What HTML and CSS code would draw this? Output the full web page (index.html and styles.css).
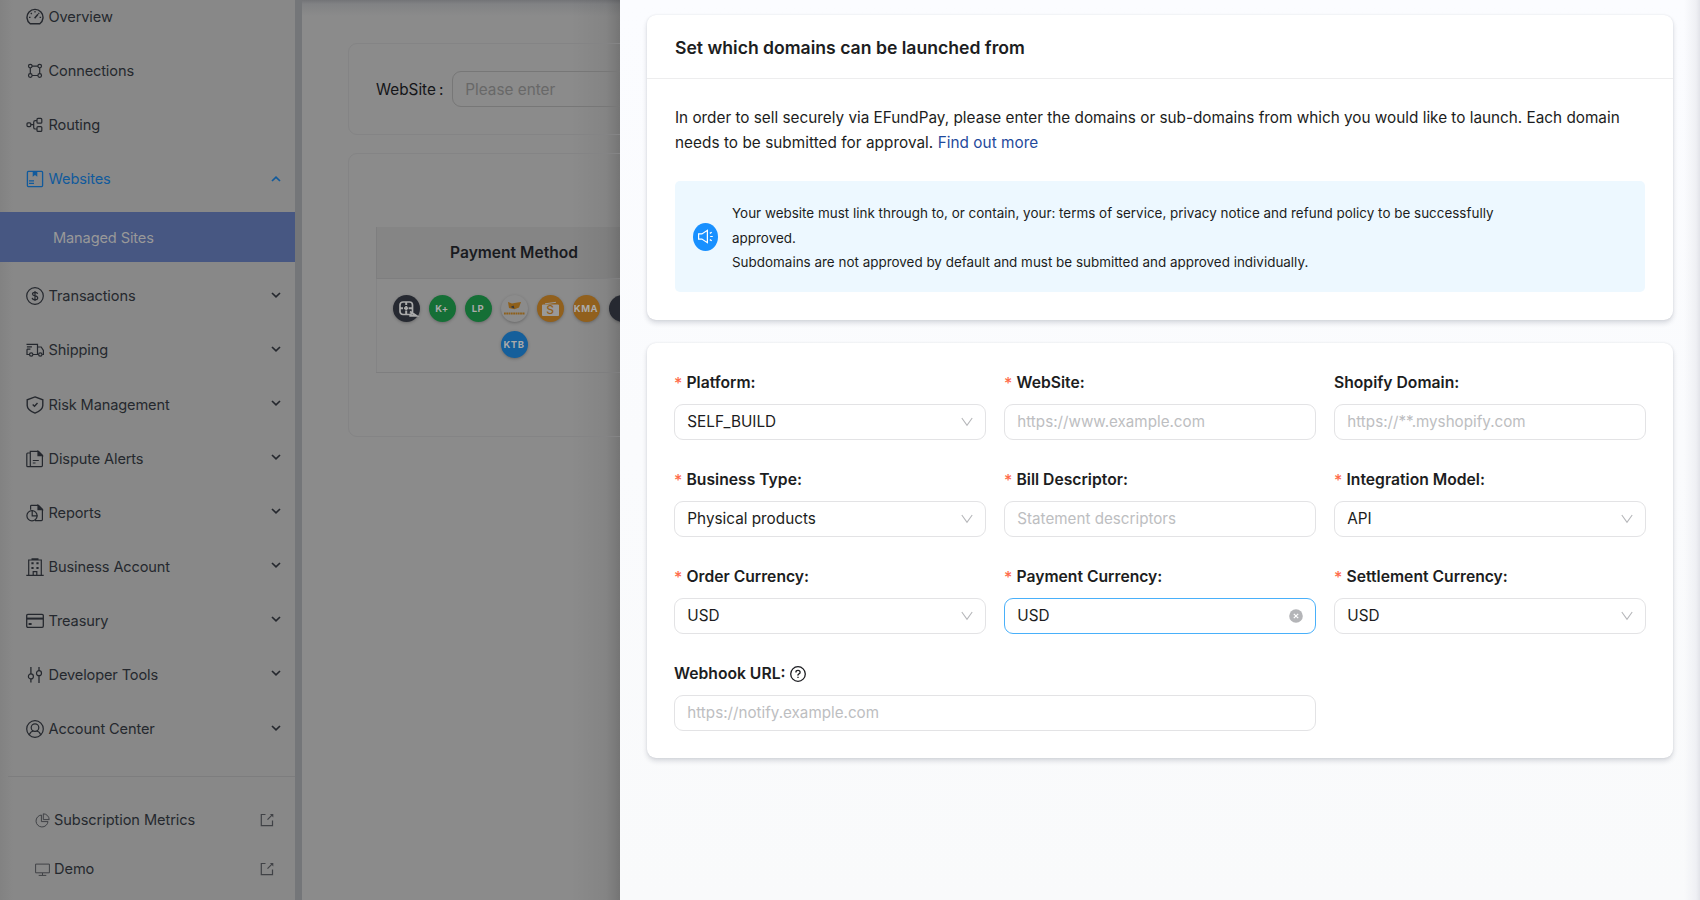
FILE: index.html
```
<!DOCTYPE html>
<html lang="en">
<head>
<meta charset="utf-8">
<title>EFundPay - Managed Sites</title>
<link rel="stylesheet" href="styles.css">
</head>
<body>
<svg class="sprite" width="0" height="0">
  <symbol id="down" viewBox="0 0 10 10"><path d="M1 3l4 3.8L9 3" stroke-width="1.7"/></symbol>
  <symbol id="arrow" viewBox="0 0 12 12"><path d="M.8 2l5.2 7.2L11.2 2" stroke-width="1.1"/></symbol>
  <symbol id="ext" viewBox="0 0 14 14"><path d="M5.500 1.500H1.300v11.200h11.200V7.500M7.500 6.700L12 2.200" stroke-width="1.200"/><path d="M9.900 1h3.400v3.400z" fill="currentColor" stroke="none"/></symbol>
</svg>
<div class="app">
  <aside class="sidebar">
    <ul class="menu">
      <li class="item"><svg viewBox="0 0 18 18"><path d="M4.2 15.8a8 8 0 1 1 9.6 0z" stroke-width="1.4"/><path d="M8.6 10.2L12 6.3" stroke-width="1.5"/><path d="M3 9.3h1.5M13.6 9.3h1.5M9 3v1.5M4.8 5l1 1M13.2 5l-.8.8"/></svg><span>Overview</span></li>
      <li class="item"><svg viewBox="0 0 18 18"><circle cx="4.3" cy="4.1" r="1.8"/><circle cx="13.7" cy="4.1" r="1.8"/><circle cx="4.3" cy="13.5" r="1.8"/><circle cx="13.7" cy="13.5" r="1.8"/><path d="M6 4.1h6M6 13.5h6M4.3 6v5.7M13.7 6v5.7"/></svg><span>Connections</span></li>
      <li class="item"><svg viewBox="0 0 18 18"><rect x="1" y="6.8" width="3.8" height="3.8" rx="1"/><rect x="11" y="2.4" width="4.8" height="4.8" rx="1"/><rect x="11" y="10.6" width="4.8" height="4.8" rx="1"/><path d="M4.8 8.7h2.8M10.9 4.6H9.3q-1.6 0-1.6 1.6v5.2q0 1.6 1.6 1.6h1.6"/></svg><span>Routing</span></li>
      <li class="item open"><svg viewBox="0 0 18 18"><rect x="1.4" y="1.4" width="15.2" height="15.2" rx="1" stroke-width="1.300"/><path d="M6.700 1.6v5.200l2.300-1.700 2.300 1.700V1.6z" fill="currentColor" stroke="none"/><path d="M3 10.8h5M3 13.4h5"/></svg><span>Websites</span><svg class="chev up"><use href="#down"/></svg></li>
    </ul>
    <div class="active">Managed Sites</div>
    <ul class="menu">
      <li class="item"><svg viewBox="0 0 18 18"><circle cx="9" cy="9" r="8.3"/><path d="M11.6 6.9Q11.3 5.4 9 5.4 6.5 5.4 6.5 7.1 6.5 8.5 9 8.9q2.7.4 2.7 2 0 1.8-2.7 1.8-2.6 0-2.8-1.8M9 4v10"/></svg><span>Transactions</span><svg class="chev"><use href="#down"/></svg></li>
      <li class="item"><svg viewBox="0 0 18 18"><path d="M.5 3.3h11v10.2H7M.9 5.8h5M.9 8.2h3.5M1 8.3v5.2h2.200M11.6 6h3.6l2.2 3.5v4h-1.2"/><circle cx="5.2" cy="13.5" r="1.7"/><circle cx="14.3" cy="13.5" r="1.7"/></svg><span>Shipping</span><svg class="chev"><use href="#down"/></svg></li>
      <li class="item"><svg viewBox="0 0 18 18"><path d="M9 .9l7.8 2.9v5.600q0 4.400-7.800 7.700Q1.200 13.800 1.200 9.400V3.800z" stroke-width="1.4"/><path d="M6.700 8.600l1.800 1.700 3-3.200" stroke-width="1.4"/></svg><span>Risk Management</span><svg class="chev"><use href="#down"/></svg></li>
      <li class="item"><svg viewBox="0 0 18 18"><path d="M4.300 1.400h8.200l3.900 3.900v10.300q0 1-1 1H5.300q-1 0-1-1zM4 3H1.700q-.9 0-.9 1v11.700q0 .9.900.900h4M6.800 10.500h6M6.800 13h2.700"/><path d="M12 1.400v4.300h4.400z" fill="currentColor"/></svg><span>Dispute Alerts</span><svg class="chev"><use href="#down"/></svg></li>
      <li class="item"><svg viewBox="0 0 18 18"><path d="M4.600 5.800V2.200q0-.8.800-.8h7.100l3.900 3.900v10.300q0 1-1 1H9M6.200 6.300v5.500h5.300"/><circle cx="6" cy="11.800" r="5.100"/><path d="M12 1.400v4.300h4.400z" fill="currentColor"/></svg><span>Reports</span><svg class="chev"><use href="#down"/></svg></li>
      <li class="item"><svg viewBox="0 0 18 18"><path d="M.3 17.300h17.400M2.700 17V2h12.600v15M5.500.8h7M7.200 17v-3.300h3.600V17" stroke-width="1.200"/><path d="M5.400 4.300h2.200v2H5.400zM10.400 4.300h2.200v2h-2.200zM5.400 9h2.200v2H5.400zM10.400 9h2.200v2h-2.200z" fill="currentColor" stroke="none"/></svg><span>Business Account</span><svg class="chev"><use href="#down"/></svg></li>
      <li class="item"><svg viewBox="0 0 18 18"><rect x=".7" y="2.300" width="16.600" height="13" rx="1.200" stroke-width="1.300"/><path d="M1 6.600h16" stroke-width="2"/><path d="M2.600 11h3v2h-3z" fill="currentColor" stroke="none"/></svg><span>Treasury</span><svg class="chev"><use href="#down"/></svg></li>
      <li class="item"><svg viewBox="0 0 18 18"><circle cx="4.900" cy="10.400" r="2.500"/><circle cx="13" cy="7.200" r="2.500"/><path d="M4.900 1v6.900M4.900 12.900v3.600M13 1v3.700M13 9.700V17" stroke-width="1.300"/></svg><span>Developer Tools</span><svg class="chev"><use href="#down"/></svg></li>
      <li class="item"><svg viewBox="0 0 18 18"><circle cx="9" cy="9" r="8.300"/><circle cx="9" cy="7.600" r="3.800"/><path d="M3.300 14.800Q4.500 11.300 7.400 11M14.700 14.800Q13.500 11.300 10.600 11"/></svg><span>Account Center</span><svg class="chev"><use href="#down"/></svg></li>
    </ul>
    <ul class="links">
      <li class="link"><svg viewBox="0 0 15 15"><path d="M6.400 2A6 6 0 1 0 13 8.600H6.400z"/><path d="M8.300.8v5.800h5.900A6 6 0 0 0 8.300.8z"/></svg><span>Subscription Metrics</span><svg class="ext"><use href="#ext"/></svg></li>
      <li class="link"><svg viewBox="0 0 15 15"><path d="M.6 2.100h13.800v8.700H.6zM7.500 11v2.300M3.700 13.400h7.600"/></svg><span>Demo</span><svg class="ext"><use href="#ext"/></svg></li>
    </ul>
  </aside>

  <main class="main">
    <section class="panel search">
      <label>WebSite<i>:</i></label><div class="query">Please enter</div>
    </section>
    <section class="panel listing">
      <div class="table">
        <div class="th">Payment Method</div>
        <div class="td">
          <span class="pay dark"><svg viewBox="0 0 27 27"><rect x="7" y="7" width="12.500" height="12.500" rx="3" stroke-width="1.700"/><path d="M13.200 7v3M13.200 16v3.500M7 13.200h3M16 13.200h3M11 13.200h4.400M13.200 11v4.400M17 16.500l6.300 4.200h-7" stroke-width="2"/></svg></span>
          <span class="pay green">K+</span>
          <span class="pay green">LP</span>
          <span class="pay pale"><svg viewBox="0 0 27 27"><path d="M7 7l4 1.500 4-.8 5-.7-2 5.500-4.500 1.800L8 13z" fill="#8f601a" stroke="none"/><path d="M9.500 12l3-1.500 1 3z" fill="#33363b" stroke="none"/><path d="M3 18.600h21" stroke="#8f601a" stroke-width="2" stroke-dasharray="1.800 .5"/></svg></span>
          <span class="pay orange"><svg viewBox="0 0 27 27"><path d="M5.500 10h16v10.500h-16zM8 8.800l11-1.500" fill="#999" stroke="#999"/><text x="13.500" y="19">S</text></svg></span>
          <span class="pay orange">KMA</span>
          <span class="pay dark"></span>
          <span class="pay blue">KTB</span>
        </div>
      </div>
    </section>
  </main>

  <div class="drawer">
    <section class="card">
      <h2>Set which domains can be launched from</h2>
      <div class="body">
        <p>In order to sell securely via EFundPay, please enter the domains or sub-domains from which you would like to launch. Each domain<br><span class="tail">needs to be submitted for approval. <a>Find out more</a></span></p>
        <div class="notice">
          <span class="horn"><svg viewBox="0 0 18 18"><path d="M1.700 6.300h3.500L11 2.500v13L5.200 11.700H1.700zM13.600 5.700l2-1.200M14 9h2.700M13.600 12.300l2 1.200"/></svg></span>
          <div class="lines">Your website must link through to, or contain, your: terms of service, privacy notice and refund policy to be successfully<br>approved.<br>Subdomains are not approved by default and must be submitted and approved individually.</div>
        </div>
      </div>
    </section>
    <section class="card form">
      <div class="field"><label class="req">Platform:</label><div class="box">SELF_BUILD<svg><use href="#arrow"/></svg></div></div>
      <div class="field"><label class="req">WebSite:</label><div class="box hint">https://www.example.com</div></div>
      <div class="field"><label>Shopify Domain:</label><div class="box hint">https://**.myshopify.com</div></div>
      <div class="field"><label class="req">Business Type:</label><div class="box">Physical products<svg><use href="#arrow"/></svg></div></div>
      <div class="field"><label class="req">Bill Descriptor:</label><div class="box hint">Statement descriptors</div></div>
      <div class="field"><label class="req">Integration Model:</label><div class="box">API<svg><use href="#arrow"/></svg></div></div>
      <div class="field"><label class="req">Order Currency:</label><div class="box">USD<svg><use href="#arrow"/></svg></div></div>
      <div class="field"><label class="req">Payment Currency:</label><div class="box focus">USD<svg class="clear" viewBox="0 0 14 14"><circle cx="7" cy="7" r="6.800"/><path d="M4.800 4.800l4.400 4.400M9.200 4.800L4.800 9.200"/></svg></div></div>
      <div class="field"><label class="req">Settlement Currency:</label><div class="box">USD<svg><use href="#arrow"/></svg></div></div>
      <div class="field wide"><label>Webhook URL:<svg class="help" viewBox="0 0 16 16"><circle cx="8" cy="8" r="7.300"/><path d="M5.900 6.400q0-2.100 2.100-2.100t2.100 1.900q0 1.200-1.200 1.700T8 9.600M8 10.800v1.200"/></svg></label><div class="box hint">https://notify.example.com</div></div>
    </section>
  </div>
</div>
</body>
</html>
```
FILE: styles.css
```
* { box-sizing: border-box; }
body { margin: 0; font-family: Inter, "Noto Sans", sans-serif; overflow: hidden; }
ul { list-style: none; margin: 0; padding: 0; }
svg { fill: none; stroke: currentColor; flex: none; }
.sprite { position: absolute; }
.app { display: flex; width: 1700px; height: 900px; overflow: hidden; }

.sidebar { width: 302px; flex: none; background: linear-gradient(90deg, #828282, #888 13px); border-right: 7px solid #747679; color: #25282e; font-size: 14.6px; letter-spacing: -.13px; }
.sidebar .menu:first-child { margin-top: -10.400px; }
.item { display: flex; align-items: center; height: 54.1px; padding: 0 14px 0 26px; }
.item > svg:first-child { width: 18px; height: 18px; margin-right: 4.500px; stroke-width: 1.200; }
.item .chev { width: 10px; height: 10px; margin-left: auto; }
.item .chev:not(.up) { margin-bottom: 3px; }
.item .up { transform: rotate(180deg); }
.item.open { color: #115a9c; }
.active { height: 50px; margin: 6px 0 7.300px; padding-left: 53px; line-height: 52px; background: #475782; color: #999; }
.links { margin: 20.200px 0 0 8px; border-top: 1px solid #7d7d7e; padding-top: 18px; }
.link { display: flex; align-items: center; height: 49.400px; padding: 0 21px 0 27px; }
.link svg { width: 15px; height: 15px; margin-right: 4px; color: #404246; }
.link span { letter-spacing: -.08px; }
.link .ext { width: 14px; height: 14px; margin: 0 0 0 auto; }

.main { width: 318px; flex: none; padding: 43px 0 0 46px; background: linear-gradient(270deg, rgba(0,0,0,.16), rgba(0,0,0,.05) 14px, rgba(0,0,0,0) 50px), linear-gradient(#737477, #818284 4px, #8b8b8b 16px); overflow: hidden; }
.panel { width: 700px; border: 1px solid #848485; border-radius: 9px; padding-left: 27px; }
.search { display: flex; align-items: center; height: 92px; font-size: 15.300px; color: #141518; }
.search i { font-style: normal; margin: 0 9px 0 3px; }
.query { flex: 1; height: 36px; line-height: 35px; padding-left: 12px; border: 1px solid #777; border-radius: 9px; color: #686868; }
.listing { height: 284px; margin-top: 18px; padding-top: 73px; }
.table { width: 278px; border: 1px solid #7e7e7f; border-width: 0 0 1px; height: 146px; box-shadow: inset 1px 0 #848485; }
.th { height: 52px; border-bottom: 1px solid #7e7e7f; background: rgba(0,0,0,.04); padding-right: 2px; text-align: center; font: 600 15.600px/52px Inter, sans-serif; color: #191b1f; }
.td { display: flex; flex-wrap: wrap; justify-content: center; gap: 9px; width: 260px; margin: 15.500px 0 0 8px; }
.pay { display: flex; align-items: center; justify-content: center; width: 27px; height: 27px; border-radius: 50%; box-shadow: 0 1px 3px rgba(0,0,0,.25); color: #aaa; font-size: 9.500px; font-weight: 700; letter-spacing: .5px; }
.pay svg { width: 27px; height: 27px; }
.pay text { font: 500 12px Inter, sans-serif; fill: #92601c; stroke: none; text-anchor: middle; }
.dark { background: #262931; }
.green { background: #156f36; }
.pale { background: #8b8b8b; }
.orange { background: #91601d; }
.blue { background: #155f9b; }

.drawer { flex: 1; padding: 15px 28px 0 27px; background: linear-gradient(270deg, #dfe0e6, #eff0f4 5px, rgba(250,251,252,0) 17px), linear-gradient(#fbfcff, #f9fafb); color: #1c1d21; font-size: 15.300px; }
.card { width: 1025.500px; background: #fff; border-radius: 9px; box-shadow: 0 3px 5px rgba(30,35,60,.16), 0 0 2px rgba(30,35,60,.1); }
.card h2 { margin: 0; padding-left: 28px; height: 64px; line-height: 65px; border-bottom: 1px solid #ededee; font-size: 17.600px; font-weight: 600; }
.body { padding: 26px 27.500px 28px 28px; }
.body p { margin: 0; line-height: 25px; white-space: nowrap; }
.tail { letter-spacing: .05px; }
.body a { color: #1f4a9c; }
.notice { display: flex; align-items: center; height: 111px; margin-top: 26px; padding-left: 18px; gap: 14px; border-radius: 5px; background: #edf8ff; font-size: 13.450px; line-height: 24.800px; white-space: nowrap; }
.lines { padding-top: 3px; }
.horn { display: flex; align-items: center; justify-content: center; width: 25px; height: 28px; border-radius: 50%; background: #1890ff; color: #fff; }
.horn svg { width: 17px; height: 17px; stroke-width: 1.300; }

.form { display: grid; grid-template-columns: repeat(3, 312px); column-gap: 18px; grid-auto-rows: 97px; height: 415px; margin-top: 23px; padding: 27px 0 0 27px; }
.field label { display: flex; align-items: center; height: 25px; margin-bottom: 9px; font-size: 15.700px; font-weight: 600; }
.req::before { content: "*"; width: 12.500px; color: #ff6b4a; font-weight: 500; font-size: 16px; }
.wide { grid-column: span 2; }
.box { display: flex; align-items: center; justify-content: space-between; height: 36px; padding: 0 12px 1px 12.300px; border: 1px solid #e3e3e5; border-radius: 9px; }
.box svg { width: 12px; height: 12px; color: #b5b6b9; }
.hint { color: #bdbec1; font-size: 15.200px; }
.focus { border-color: #49b0fa; }
.box .clear { width: 14px; height: 14px; stroke: #fff; stroke-width: 1.200; }
.clear circle { fill: #b4b5b8; stroke: none; }
.help { width: 16px; height: 16px; margin-left: 4px; stroke-width: 1.300; }
```
